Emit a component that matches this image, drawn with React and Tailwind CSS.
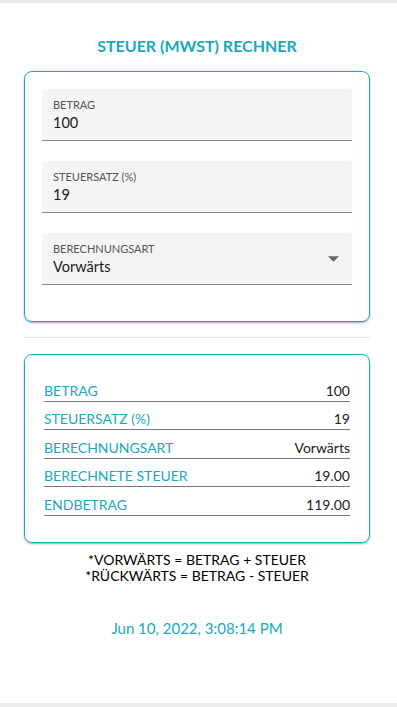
export default function App() {
  const teal = "text-[#17a9c1]";
  const rows = [
    ["BETRAG", "100"],
    ["STEUERSATZ (%)", "19"],
    ["BERECHNUNGSART", "Vorwärts"],
    ["BERECHNETE STEUER", "19.00"],
    ["ENDBETRAG", "119.00"],
  ];
  return (
    <div className="w-[397px] h-[707px] bg-white flex flex-col font-['Lato',sans-serif] overflow-hidden">
      <div className="h-[3px] bg-[#ececec] shrink-0" />
      <div className="flex-1 flex flex-col pl-[24px] pr-[27px]">
        <h1 className={`mt-[33px] text-center text-[16px] font-bold leading-[20px] ${teal}`}>
          STEUER (MWST) RECHNER
        </h1>
        <div className="mt-[15px] h-[251px] border border-[#17a9c1] rounded-[8px] shadow-[0_1px_2px_rgba(0,0,0,0.35)] px-[17px] pt-[17px] flex flex-col gap-[20px]">
          <Field label="BETRAG" value="100" />
          <Field label="STEUERSATZ (%)" value="19" />
          <Field label="BERECHNUNGSART" value="Vorwärts" select />
        </div>
        <div className="mt-[15px] h-px bg-[#e3e3e3]" />
        <div className="mt-[16px] h-[189px] border border-[#17a9c1] rounded-[8px] shadow-[0_1px_2px_rgba(0,0,0,0.35)] px-[19px] pt-[18px]">
          {rows.map(([k, v]) => (
            <div key={k} className="h-[28.5px] flex items-end justify-between border-b border-[#7a7a7a] pb-[1px] text-[14px] leading-[18px]">
              <span className={teal}>{k}</span>
              <span className="text-[#222]">{v}</span>
            </div>
          ))}
        </div>
        <div className="mt-[9px] text-center text-[14px] leading-[16px] text-black">
          <div>*VORWÄRTS = BETRAG + STEUER</div>
          <div>*RÜCKWÄRTS = BETRAG - STEUER</div>
        </div>
        <div className={`mt-[34px] text-center text-[15px] leading-[20px] ${teal}`}>
          Jun 10, 2022, 3:08:14 PM
        </div>
      </div>
      <div className="h-[4px] bg-[#ececec] shrink-0" />
    </div>
  );
}

function Field({ label, value, select }) {
  return (
    <div className="h-[52px] bg-[#f4f4f4] rounded-t-[4px] border-b border-[#8a8a8a] px-[11px] pt-[9px] relative">
      <div className="text-[11px] leading-[14px] text-[#555]">{label}</div>
      <div className="text-[14.5px] leading-[20px] text-[#1a1a1a] mt-[1px]">{value}</div>
      {select && (
        <svg className="absolute right-[13px] top-[23px]" width="11" height="6" viewBox="0 0 10 5">
          <path d="M0 0 L5 5 L10 0 Z" fill="#666" />
        </svg>
      )}
    </div>
  );
}
